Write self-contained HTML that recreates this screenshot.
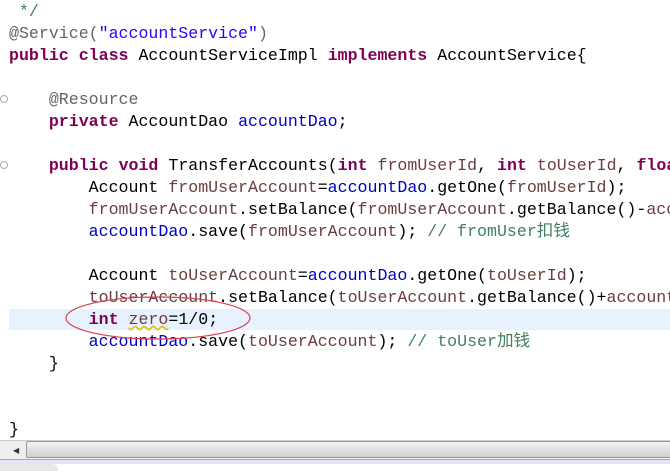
<!DOCTYPE html>
<html><head><meta charset="utf-8"><style>
html,body{margin:0;padding:0;width:670px;height:471px;overflow:hidden;background:#fff;position:relative}
.code{position:absolute;left:9px;top:1px;width:661px;height:439px;overflow:hidden;font-family:"Liberation Mono","Noto Sans CJK SC",monospace;font-size:16.6px;color:#000}
.l{height:22px;line-height:22px;white-space:pre}
.k{color:#7f0055;font-weight:bold}
.f{color:#0000c0}
.s{color:#2a00ff}
.c{color:#3f7f5f}
.a{color:#646464}
.v{color:#6a3e3e}
.hl{position:absolute;left:9px;top:309px;width:661px;height:21px;background:#e8f2fe}
.fold{position:absolute;left:0;width:6px;height:6px;border:1px solid #aaa;border-radius:50%;}
</style></head><body>
<div class="hl"></div>
<div class="fold" style="top:95px"></div>
<div class="fold" style="top:161px"></div>
<div class="code"><div class="l"> <span class="c">*/</span></div><div class="l"><span class="a">@Service(</span><span class="s">"accountService"</span><span class="a">)</span></div><div class="l"><span class="k">public</span> <span class="k">class</span> AccountServiceImpl <span class="k">implements</span> AccountService{</div><div class="l"> </div><div class="l">    <span class="a">@Resource</span></div><div class="l">    <span class="k">private</span> AccountDao <span class="f">accountDao</span>;</div><div class="l"> </div><div class="l">    <span class="k">public</span> <span class="k">void</span> TransferAccounts(<span class="k">int</span> <span class="v">fromUserId</span>, <span class="k">int</span> <span class="v">toUserId</span>, <span class="k">float</span> <span class="v">money</span>){</div><div class="l">        Account <span class="v">fromUserAccount</span>=<span class="f">accountDao</span>.getOne(<span class="v">fromUserId</span>);</div><div class="l">        <span class="v">fromUserAccount</span>.setBalance(<span class="v">fromUserAccount</span>.getBalance()-<span class="v">account</span></div><div class="l">        <span class="f">accountDao</span>.save(<span class="v">fromUserAccount</span>); <span class="c">// fromUser扣钱</span></div><div class="l"> </div><div class="l">        Account <span class="v">toUserAccount</span>=<span class="f">accountDao</span>.getOne(<span class="v">toUserId</span>);</div><div class="l">        <span class="v">toUserAccount</span>.setBalance(<span class="v">toUserAccount</span>.getBalance()+<span class="v">account</span></div><div class="l">        <span class="k">int</span> <span class="v" style="text-decoration:underline wavy #e0c000">zero</span>=1/0;</div><div class="l">        <span class="f">accountDao</span>.save(<span class="v">toUserAccount</span>); <span class="c">// toUser加钱</span></div><div class="l">    }</div><div class="l"> </div><div class="l"> </div><div class="l">}</div></div>
<svg style="position:absolute;left:0;top:0" width="670" height="471">
<ellipse cx="158" cy="318" rx="92" ry="21" fill="none" stroke="#d84050" stroke-width="1.2"/>
</svg>
<div style="position:absolute;left:0;top:440px;width:670px;height:19px;background:#eee;border-top:1px solid #ccc"></div>
<div style="position:absolute;left:13px;top:446px;font-size:8px;color:#333;font-family:'Liberation Sans',sans-serif">◀</div>
<div style="position:absolute;left:26px;top:441px;width:650px;height:15px;border:1px solid #999;border-radius:2px;background:linear-gradient(#f2f2f2,#d0d0d0)"></div>
<div style="position:absolute;left:0;top:459px;width:670px;height:1px;background:#aaa"></div>
<div style="position:absolute;left:0;top:460px;width:670px;height:4px;background:#e1e5f5"></div>
<div style="position:absolute;left:0;top:464px;width:58px;height:7px;background:#e8e8e8;border-radius:0 6px 0 0"></div>
</body></html>
